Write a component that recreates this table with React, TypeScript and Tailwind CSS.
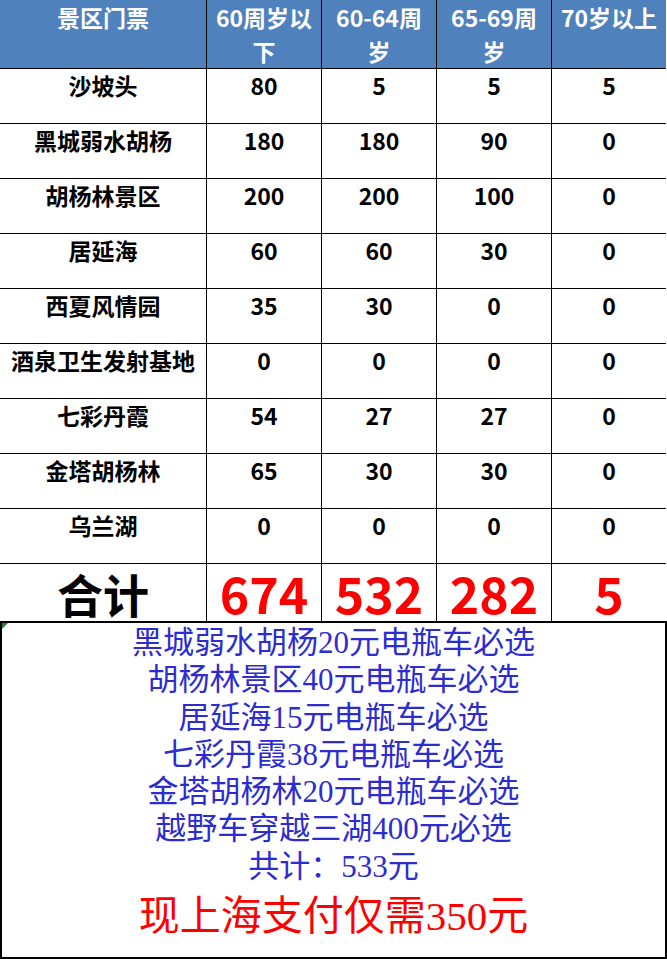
const rows: [string, string, string, string, string][] = [
  ['沙坡头', '80', '5', '5', '5'],
  ['黑城弱水胡杨', '180', '180', '90', '0'],
  ['胡杨林景区', '200', '200', '100', '0'],
  ['居延海', '60', '60', '30', '0'],
  ['西夏风情园', '35', '30', '0', '0'],
  ['酒泉卫生发射基地', '0', '0', '0', '0'],
  ['七彩丹霞', '54', '27', '27', '0'],
  ['金塔胡杨林', '65', '30', '30', '0'],
  ['乌兰湖', '0', '0', '0', '0'],
];

const totals = ['674', '532', '282', '5'];

const notes = [
  '黑城弱水胡杨20元电瓶车必选',
  '胡杨林景区40元电瓶车必选',
  '居延海15元电瓶车必选',
  '七彩丹霞38元电瓶车必选',
  '金塔胡杨林20元电瓶车必选',
  '越野车穿越三湖400元必选',
  '共计：533元',
];

const sans = { fontFamily: '"Noto Sans CJK SC", "Noto Sans", sans-serif' };

function HeaderCell({ lines, first }: { lines: string[]; first?: boolean }) {
  return (
    <div
      className={`h-[68px] overflow-hidden whitespace-nowrap bg-[#4f81bd] text-center text-[23px] font-bold leading-[34px] text-white ${
        first ? '' : 'border-l border-black'
      }`}
    >
      {lines.map((l) => (
        <div key={l}>{l}</div>
      ))}
    </div>
  );
}

function Cell({ text, first }: { text: string; first?: boolean }) {
  return (
    <div
      className={`h-[55px] overflow-hidden whitespace-nowrap border-t border-black text-center text-[23px] font-bold leading-[33px] text-black ${
        first ? '' : 'border-l'
      }`}
    >
      {text}
    </div>
  );
}

export default function App() {
  return (
    <div className="h-[959px] w-[667px] overflow-hidden bg-white" style={sans}>
      <div className="grid grid-cols-[206px_115px_115px_115px_115px]">
        <HeaderCell lines={['景区门票']} first />
        <HeaderCell lines={['60周岁以', '下']} />
        <HeaderCell lines={['60-64周', '岁']} />
        <HeaderCell lines={['65-69周', '岁']} />
        <HeaderCell lines={['70岁以上']} />

        {rows.map((r) =>
          r.map((v, i) => <Cell key={r[0] + i} text={v} first={i === 0} />)
        )}

        <div className="h-[58px] overflow-hidden border-t border-black text-center text-[46px] font-bold leading-[58px] text-black">
          合计
        </div>
        {totals.map((t) => (
          <div
            key={t}
            className="flex h-[58px] items-start justify-center border-l border-t border-black text-center text-[50px] font-bold leading-[56px] text-[#ff0000]"
          >
            {t}
          </div>
        ))}
      </div>

      <div
        className="relative flex h-[338px] w-[667px] flex-col items-center border-2 border-black text-center"
        style={{ fontFamily: '"Liberation Serif", "Noto Sans CJK SC", serif' }}
      >
        <div className="absolute left-0 top-0 h-0 w-0 border-r-[6px] border-t-[6px] border-r-transparent border-t-[#2e7d32]" />
        <div className="pt-[1px] text-[31px] leading-[37.3px] text-[#2c2cd0]">
          {notes.map((n) => (
            <div key={n}>{n}</div>
          ))}
        </div>
        <div className="mt-[3px] text-[41px] leading-[56px] text-[#ff0000]">现上海支付仅需350元</div>
      </div>
    </div>
  );
}
